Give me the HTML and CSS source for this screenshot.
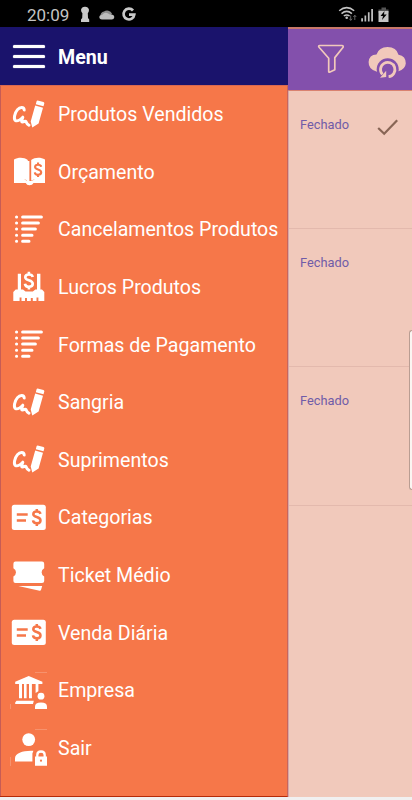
FILE: index.html
```
<!DOCTYPE html>
<html lang="pt-BR">
<head>
<meta charset="utf-8">
<title>Menu</title>
<link rel="stylesheet" href="styles.css">
</head>
<body>
<svg class="defs" aria-hidden="true">
  <symbol id="dollar" viewBox="0 0 10 18"><path d="M8.7 5.5C8.3 3.8 6.9 3.1 5 3.1C2.9 3.1 1.5 4.2 1.5 5.8C1.5 9.5 8.7 7.8 8.7 12C8.7 13.8 7.2 14.9 5 14.9C2.8 14.9 1.4 13.8 1.2 12M5 .5V3M5 15V17.5" fill="none" stroke="currentColor" stroke-width="2.5"/></symbol>
  <symbol id="sign" viewBox="0 0 36 36"><path d="M13.2 13C13 9.6 9 9.6 6.5 12.6C3.4 16.2 2.4 22.3 4.6 23.6C6.6 24.6 9.6 22.4 11.8 20.2C11 22.4 9.9 24.8 11.6 25C13.4 25 14.2 23.4 15 24.6C15.6 26 15.8 27.6 18 28.2" fill="none" stroke="currentColor" stroke-width="3" stroke-linecap="round" stroke-linejoin="round"/><path d="M26.6 3.5L32.5 5Q33.6 5.5 33.3 6.5L32.5 9.3L24.8 7.3L25.5 4.4Q25.8 3.5 26.6 3.5ZM24.2 8.6L32 10.8L27.6 26.6L21.3 30.6L19.7 24.5Z"/></symbol>
  <symbol id="book" viewBox="0 0 36 36"><path d="M3 5.5C7 3.2 13 3 16.8 6V26.5C12 24.3 7 25 3 28ZM20.2 6C24 3 30 3.2 34 5.5V28C30 25 25 24.3 20.2 26.5ZM3 24.5L12 25L16.8 27H20.2L25 25L34 24.5V29H22.5Q21.5 31.3 18.5 31.3Q15.7 31.3 14.8 29H3Z"/><path d="M16 7V27H18.4V7Z"/><g class="cut"><use href="#dollar" x="22.8" y="8" width="8.5" height="15.5"/></g></symbol>
  <symbol id="bars" viewBox="0 0 36 36"><g fill="none" stroke="currentColor" stroke-width="3" stroke-linecap="round"><path d="M11.6 4.9H30.4M11.6 11H27.4M11.6 17.1H24.4M11.6 23.2H21M11.6 29.3H18M5.5 4.9h.1M5.5 11h.1M5.5 17.1h.1M5.5 23.2h.1M5.5 29.3h.1"/></g></symbol>
  <symbol id="profit" viewBox="0 0 36 36"><path d="M6.8 3.8H10V19.6H12L14.5 21.5H21.8L24.4 19.6H26V3.8H29.4V19.6H31L33.3 22V31H27.4V27.5H25.5V31H21.8V28H19.8V31H16V28H14V31H10.5V27.5H8.6V31H2.3V22L4.7 19.6H6.8Z"/><use href="#dollar" x="12.7" y="1.3" width="10.4" height="18.7"/></symbol>
  <symbol id="card" viewBox="0 0 36 36"><rect x=".8" y="4.8" width="34" height="25.2" rx="2.5"/><g class="cut"><path d="M5.8 14.4H16.7M5.8 20.6H15" fill="none" stroke="currentColor" stroke-width="2.5"/><use href="#dollar" x="20.8" y="8.4" width="10" height="18"/></g></symbol>
  <symbol id="ticket" viewBox="0 0 36 36"><path d="M4.5 3.6H31Q33.2 3.6 33.2 5.8V10.2Q30.6 11.5 30.6 14.3Q30.6 17 33.2 18.4V23Q33.2 25 31 25H4.5Q2.4 25 2.4 23V18.4Q5 17 5 14.3Q5 11.5 2.4 10.2V5.8Q2.4 3.6 4.5 3.6ZM7.3 28H31.2L30 32Q29.6 33 28.6 32.8Z"/></symbol>
  <symbol id="bank" viewBox="0 0 36 36"><path d="M17.7 3L31.4 8.7V11H4.2V8.7ZM8 10.5H11V25.3H8ZM13 10.5H15.6V25.3H13ZM18 10.5H20.9V25.3H18ZM24.6 10.5H27.4V18.3L24.6 20ZM5.5 27.8H22.8L22 31H4.2V29.5Z"/><circle cx="30" cy="23.2" r="3.4"/><path d="M24 36V33.5Q24 29.4 30 29.4Q36 29.4 36 33.5V36Z"/><path class="trace" d="M24 -.6H36V-.1H24ZM-.6 31H-.1V36H-.6Z"/></symbol>
  <symbol id="exit" viewBox="0 0 36 36"><circle cx="17.7" cy="9.6" r="6.4"/><path d="M4 31.5V28.2C4 23 13 20.2 22.4 20.8L21.4 23.5V31.5ZM24 26.5H36V35.8H24Z"/><path d="M26.3 27V25Q26.3 21.5 30 21.5Q33.7 21.5 33.7 25V27" fill="none" stroke="currentColor" stroke-width="2.3"/><circle class="cut" cx="30" cy="30.7" r="1.1" fill="currentColor"/><path class="trace" d="M24 -.6H36V-.1H24ZM-.6 27H-.1V36H-.6Z"/></symbol>
</svg>
<div class="status">
  <span class="clock">20:09</span>
  <svg class="status-left" viewBox="0 0 62 26" width="62" height="26"><path fill="#c9c9c9" d="M5 6.8A4 4 0 0 1 9 9.8Q9 12 7.8 13.2L8 18L9.2 19.4V22H1V19.4L2.2 18L2.4 13.2Q1 12 1 9.8A4 4 0 0 1 5 6.8Z"/><path fill="#8d8d8d" d="M20.5 16A4 4 0 0 1 24 11.5A5.5 5.5 0 0 1 32 13.5L29 18H22Z"/><path fill="#bdbdbd" d="M22 19.5Q19.2 19.2 19.3 16.8Q19.6 14.8 22 15Q25.3 10.8 29.8 14.6Q34.2 13.9 34.3 17.2Q34 19.4 31.8 19.5Z"/><path d="M53 10.5A5.4 5.4 0 1 0 54.3 14.7H49" fill="none" stroke="#c9c9c9" stroke-width="2.7"/></svg>
  <svg class="status-right" viewBox="0 0 52 26" width="52" height="26"><g fill="none" stroke="#c4c4c4" stroke-width="1.5"><path d="M1.2 10.8Q8.7 4.5 16.2 10.8M3.5 13.6Q8.7 9.2 13.9 13.6M5.8 16Q8.7 13.8 11.6 16"/></g><circle cx="8.7" cy="17.7" r="1.3" fill="#c4c4c4"/><path d="M12.7 15.5V20M11.3 18.7L12.7 20.5L14.1 18.7M16.8 20V15.5M15.4 17L16.8 15.2L18.2 17" fill="none" stroke="#666" stroke-width="1"/><path fill="#bdbdbd" d="M23.2 18.2H25V21.5H23.2ZM26.5 15.5H28.2V21.5H26.5ZM29.9 12.3H31.6V21.5H29.9ZM33.2 9H35V21.5H33.2Z"/><path fill="#555" d="M43.5 7.5H48V9.5H50.5V13H40.5V9.5H43.5Z"/><path fill="#c4c4c4" d="M40.5 11H50.5V22H40.5Z"/><path d="M46.5 11L42.5 16H45L44 20L48.7 14.6H46Z"/></svg>
</div>
<div class="app">
  <nav class="drawer">
    <header class="drawer-head"><span class="burger"><i></i><i></i><i></i></span><h1>Menu</h1></header>
    <ul class="items">
      <li><svg><use href="#sign"/></svg><span>Produtos Vendidos</span></li>
      <li><svg><use href="#book"/></svg><span>Orçamento</span></li>
      <li><svg><use href="#bars"/></svg><span>Cancelamentos Produtos</span></li>
      <li><svg><use href="#profit"/></svg><span>Lucros Produtos</span></li>
      <li><svg><use href="#bars"/></svg><span>Formas de Pagamento</span></li>
      <li><svg><use href="#sign"/></svg><span>Sangria</span></li>
      <li><svg><use href="#sign"/></svg><span>Suprimentos</span></li>
      <li><svg><use href="#card"/></svg><span>Categorias</span></li>
      <li><svg><use href="#ticket"/></svg><span>Ticket Médio</span></li>
      <li><svg><use href="#card"/></svg><span>Venda Diária</span></li>
      <li><svg><use href="#bank"/></svg><span>Empresa</span></li>
      <li><svg><use href="#exit"/></svg><span>Sair</span></li>
    </ul>
  </nav>
  <main class="page">
    <div class="toolbar">
      <svg viewBox="0 0 124 62" width="124" height="62"><path d="M32 17.5H54.5Q56 17.5 55.6 19.3L47.3 29.6V41.8L42 44.2Q41.3 44.4 41.2 43.5V30.2L32 19.8Q30.3 17.6 32 17.5Z" transform="translate(-.5 0)" fill="none" stroke="#f1c9bb" stroke-width="1.7" stroke-linejoin="round"/><g transform="translate(0 .5)"><path fill="#f1c9bb" d="M89 43.2Q80.3 41 80.6 33.5Q81 26.4 88.5 26Q91 18.8 99.5 18.6Q108.5 18.8 110.5 26.2Q118 27.5 117.8 35Q117.2 40.8 110.5 42.8Z"/><circle cx="99.7" cy="40.8" r="11" fill="#8350ac"/><path d="M94.4 45.9A7.2 7.2 0 1 1 100.6 48.2" fill="none" stroke="#f1c9bb" stroke-width="2.8"/><path fill="#f1c9bb" d="M92 49.3L98.2 48.5V42.3Z"/></g></svg>
    </div>
    <section class="entry"><span>Fechado</span><svg viewBox="0 0 22 18" width="22" height="18"><path d="M1.2 10L7.2 15.8L20.2 2.3" fill="none" stroke="#886555" stroke-width="2.2"/></svg></section>
    <section class="entry"><span>Fechado</span></section>
    <section class="entry"><span>Fechado</span></section>
    <div class="edge-handle"></div>
  </main>
</div>
</body>
</html>
```
FILE: styles.css
```
* { box-sizing: border-box; }
body { margin: 0; width: 412px; height: 800px; overflow: hidden; background: #f1f0f0; font-family: Roboto, sans-serif; }
.defs { display: none; }
.status { height: 27px; background: #000; display: flex; align-items: flex-start; }
.clock { width: 80px; padding-left: 27px; font-size: 17px; line-height: 30px; color: #c4c4c4; }
.status-right { margin-left: 196px; }
.app { display: flex; height: 770px; }
.drawer { width: 288px; background: #f67749; color: #fff; border-bottom: 1px solid #b52a08; border-right: 1px solid #c9655a; }
.drawer-head { width: 288px; height: 58px; display: flex; align-items: center; background: #1a136c; }
.burger { width: 32px; height: 23px; margin-left: 13px; display: flex; flex-direction: column; justify-content: space-between; }
.burger i { height: 3px; border-radius: 2px; background: #fff; box-shadow: 0 0 1px #fff; }
h1 { margin: 3px 0 0 13px; font-size: 19.6px; font-weight: 700; line-height: 24px; }
.items { list-style: none; margin: 0; padding: 0; border-left: 1px solid #c75c55; border-top: 1px solid #d96850; height: 711px; }
.items li { height: 57.6px; display: flex; align-items: center; padding-left: 10px; font-size: 19.6px; line-height: 24px; white-space: nowrap; }
.items li span { margin-top: 1px; }
.items svg { width: 36px; height: 36px; flex: none; margin-right: 11px; fill: #fff; color: #fff; overflow: visible; }
symbol { overflow: visible; }
.cut { color: #f67749; }
.trace { opacity: .4; }
.page { width: 124px; background: #f1c9bb; border-left: 1px solid #d5a7aa; position: relative; }
.toolbar { height: 64px; margin-left: -1px; background: #8350ac; border-top: 2px solid #c87869; border-bottom: 1px solid #d98270; }
.toolbar svg { display: block; margin-top: -1px; }
.entry { height: 138.2px; padding: 25px 13px 0 11px; display: flex; justify-content: space-between; align-items: flex-start; border-bottom: 1px solid #e3b9ad; font-size: 12.8px; line-height: 18px; color: #705ca8; }
.entry svg { margin-top: 2px; }
.edge-handle { position: absolute; top: 303px; right: 0; width: 3px; height: 160px; background: #fbf5f2; border: 1px solid #b99d92; border-right: 0; border-radius: 3px 0 0 3px; }
```
